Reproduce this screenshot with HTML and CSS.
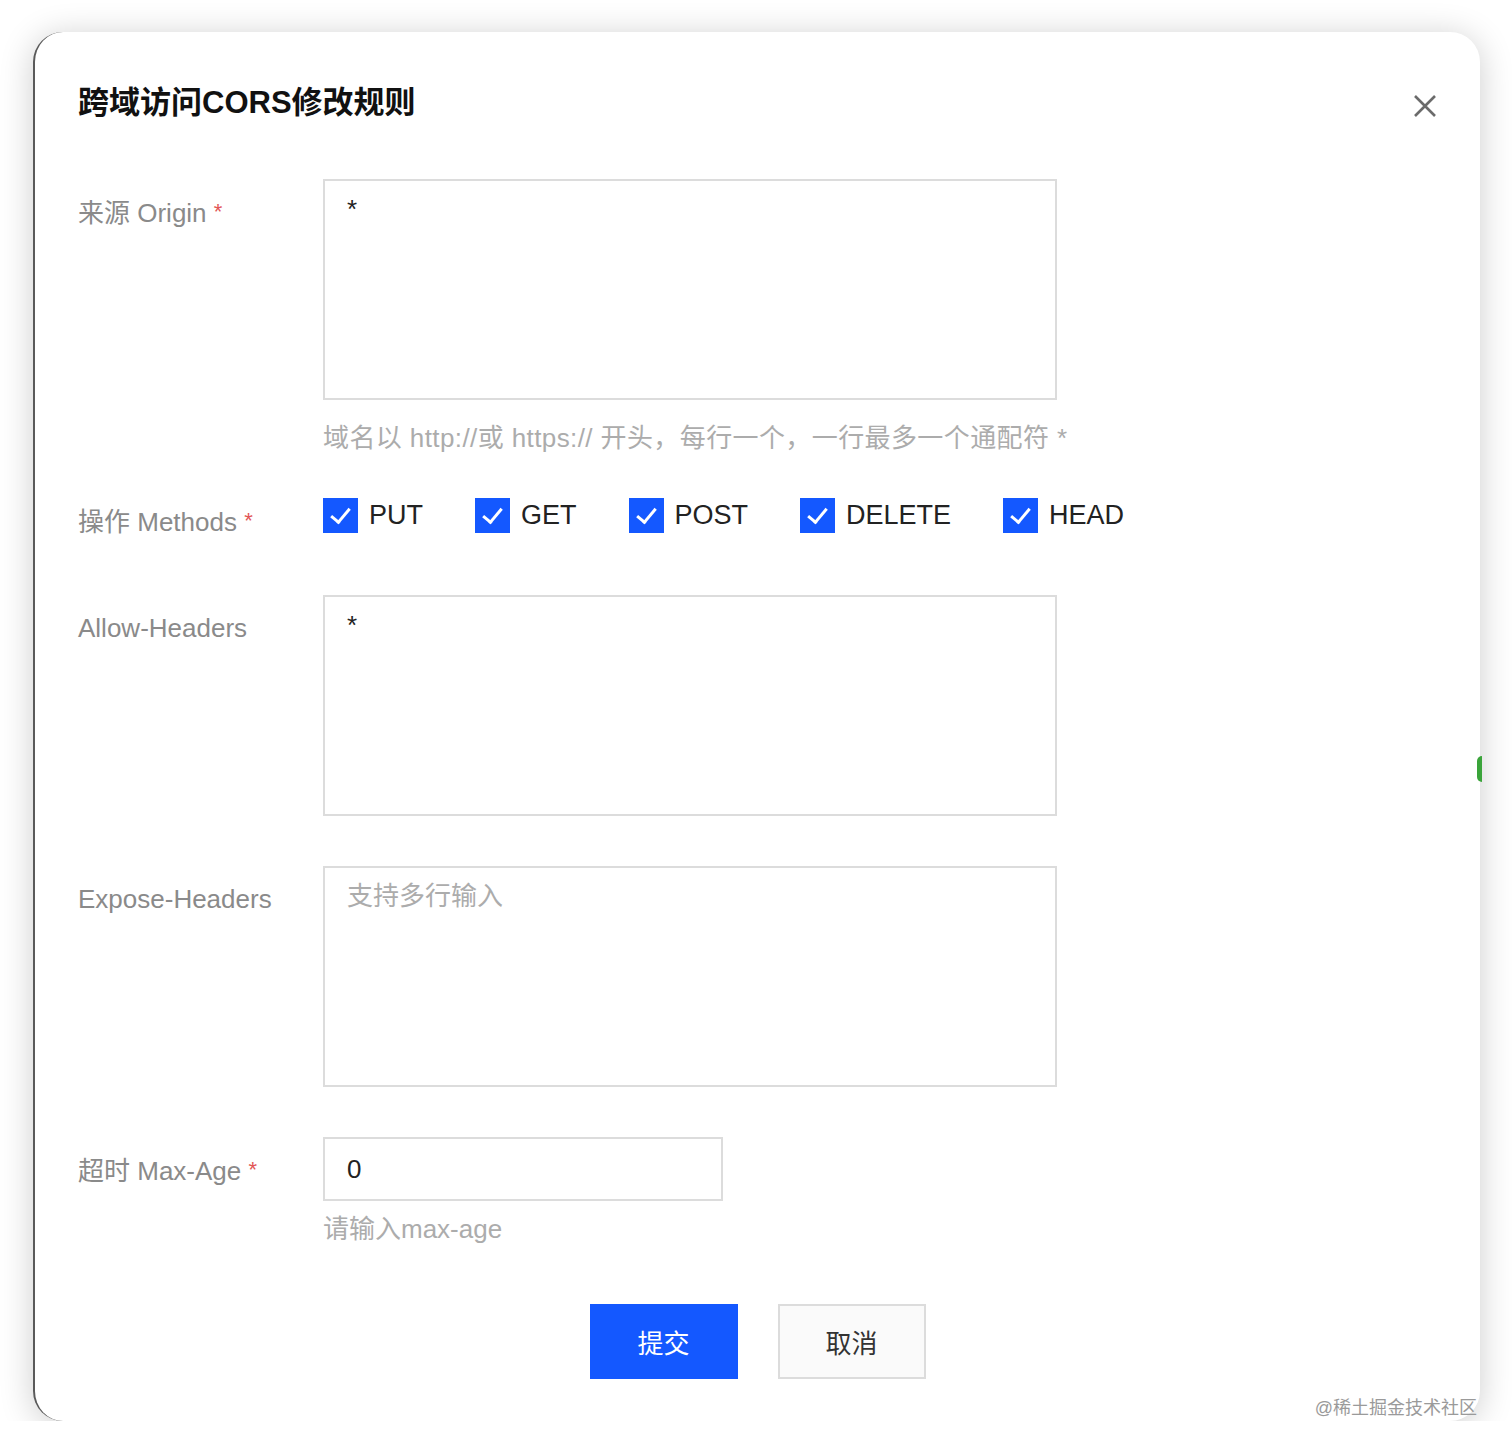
FILE: index.html
```html
<!DOCTYPE html>
<html lang="zh-CN">
  <head>
    <meta charset="UTF-8" />
    <meta name="viewport" content="width=device-width, initial-scale=1.0" />
    <title>跨域访问CORS修改规则</title>
    <link rel="stylesheet" href="styles.css">
  </head>

  <body>
    <div class="dialog">
      <div class="dialog-header">
        <h2>跨域访问CORS修改规则</h2>
        <button class="close-button" aria-label="关闭">
          <svg width="24" height="24" viewBox="0 0 24 24">
            <path d="M2 2 L22 22 M22 2 L2 22" stroke="#6b6b6b" stroke-width="2.6" fill="none" />
          </svg>
        </button>
      </div>

      <div class="form-item gap-39">
        <label class="form-label">来源 Origin <span class="required">*</span></label>
        <div class="form-control">
          <textarea>*</textarea>
          <div class="help">域名以 http://或 https:// 开头，每行一个，一行最多一个通配符 *</div>
        </div>
      </div>

      <div class="form-item gap-55">
        <label class="form-label methods-label">操作 Methods <span class="required">*</span></label>
        <div class="form-control">
          <div class="checkbox-group">
            <label class="checkbox"><span class="box"></span>PUT</label>
            <label class="checkbox"><span class="box"></span>GET</label>
            <label class="checkbox"><span class="box"></span>POST</label>
            <label class="checkbox"><span class="box"></span>DELETE</label>
            <label class="checkbox"><span class="box"></span>HEAD</label>
          </div>
        </div>
      </div>

      <div class="form-item gap-50">
        <label class="form-label">Allow-Headers</label>
        <div class="form-control">
          <textarea>*</textarea>
        </div>
      </div>

      <div class="form-item gap-50">
        <label class="form-label">Expose-Headers</label>
        <div class="form-control">
          <textarea placeholder="支持多行输入"></textarea>
        </div>
      </div>

      <div class="form-item gap-57">
        <label class="form-label">超时 Max-Age <span class="required">*</span></label>
        <div class="form-control">
          <input type="text" value="0" />
          <div class="help help-small">请输入max-age</div>
        </div>
      </div>

      <div class="dialog-footer">
        <button class="btn btn-primary">提交</button>
        <button class="btn btn-default">取消</button>
      </div>

      <span class="side-dot"></span>
      <div class="watermark">@稀土掘金技术社区</div>
    </div>
  </body>
</html>
```

FILE: styles.css
```css
:root {
  --primary-color: #1458ff;
  --border-color: #dcdcdc;
  --label-color: #8a8a8a;
  --help-color: #acacac;
  --text-color: #222;
}

* {
  box-sizing: border-box;
}

body {
  margin: 0;
  padding: 32px 0 0 33px;
  background-color: #fff;
  font-family: "Liberation Sans", Arial, "Noto Sans CJK SC", sans-serif;
  color: var(--text-color);
}

.dialog {
  position: relative;
  width: 1447px;
  background-color: #fff;
  border-radius: 30px;
  border-left: 2px solid #5a5a5a;
  box-shadow: 0 4px 34px rgba(0, 0, 0, 0.2);
  padding: 51px 43px 42px 43px;
}

.dialog-header {
  display: flex;
  justify-content: space-between;
  align-items: center;
  margin-bottom: 56px;
}

.dialog-header h2 {
  margin: 0;
  font-size: 31px;
  line-height: 40px;
  font-weight: 700;
  color: #111;
}

.close-button {
  background: none;
  border: none;
  padding: 0;
  margin-top: 6px;
  width: 24px;
  height: 24px;
  cursor: pointer;
}

.form-item {
  display: grid;
  grid-template-columns: 245px 1fr;
}

.gap-39 { margin-bottom: 39px; }
.gap-50 { margin-bottom: 50px; }
.gap-55 { margin-bottom: 55px; }
.gap-57 { margin-bottom: 57px; }

.form-label {
  padding-top: 15px;
  font-size: 26px;
  line-height: 36px;
  color: var(--label-color);
}

.methods-label {
  padding-top: 8px;
}

.required {
  color: #e25656;
  font-size: 22px;
  vertical-align: 3px;
}

textarea,
input[type="text"] {
  display: block;
  border: 2px solid var(--border-color);
  border-radius: 0;
  font-family: inherit;
  font-size: 26px;
  color: var(--text-color);
  outline: 0;
}

textarea {
  width: 734px;
  height: 221px;
  padding: 10px 22px;
  line-height: 36px;
  resize: none;
}

textarea::placeholder {
  color: var(--help-color);
}

input[type="text"] {
  width: 400px;
  height: 64px;
  padding: 0 22px;
}

.help {
  margin-top: 20px;
  font-size: 26px;
  line-height: 36px;
  color: var(--help-color);
  letter-spacing: 0.4px;
}

.help-small {
  margin-top: 10px;
  letter-spacing: 0;
}

.checkbox-group {
  display: flex;
  align-items: center;
  gap: 52px;
  height: 40px;
}

.checkbox {
  display: flex;
  align-items: center;
  gap: 11px;
  font-size: 27px;
  color: var(--text-color);
}

.checkbox .box {
  position: relative;
  width: 35px;
  height: 35px;
  background-color: var(--primary-color);
}

.checkbox .box::after {
  content: "";
  position: absolute;
  left: 12px;
  top: 6px;
  width: 8px;
  height: 16px;
  border: solid #fff;
  border-width: 0 3px 3px 0;
  transform: rotate(40deg);
}

.dialog-footer {
  display: flex;
  justify-content: center;
  gap: 40px;
}

.btn {
  width: 148px;
  height: 75px;
  font-family: inherit;
  font-size: 26px;
  cursor: pointer;
}

.btn-primary {
  background-color: var(--primary-color);
  border: none;
  color: #fff;
}

.btn-default {
  background-color: #fafafa;
  border: 2px solid var(--border-color);
  color: #333;
}

.watermark {
  position: absolute;
  right: 3px;
  bottom: 2px;
  font-size: 18px;
  color: #9a9a9a;
}

.side-dot {
  position: absolute;
  right: -2px;
  top: 724px;
  width: 5px;
  height: 26px;
  border-radius: 5px 0 0 5px;
  background-color: #3aa43a;
}
```
